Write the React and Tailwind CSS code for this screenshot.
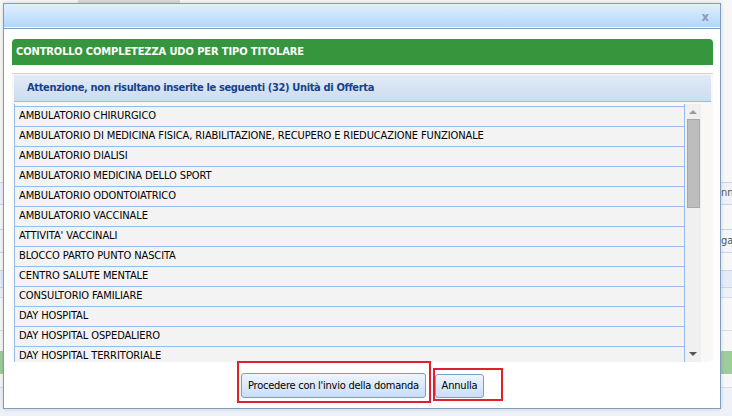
import React from 'react';

const units = [
  'AMBULATORIO CHIRURGICO',
  'AMBULATORIO DI MEDICINA FISICA, RIABILITAZIONE, RECUPERO E RIEDUCAZIONE FUNZIONALE',
  'AMBULATORIO DIALISI',
  'AMBULATORIO MEDICINA DELLO SPORT',
  'AMBULATORIO ODONTOIATRICO',
  'AMBULATORIO VACCINALE',
  "ATTIVITA' VACCINALI",
  'BLOCCO PARTO PUNTO NASCITA',
  'CENTRO SALUTE MENTALE',
  'CONSULTORIO FAMILIARE',
  'DAY HOSPITAL',
  'DAY HOSPITAL OSPEDALIERO',
  'DAY HOSPITAL TERRITORIALE',
];

const font = { fontFamily: '"DejaVu Sans Condensed", "DejaVu Sans", sans-serif' };

function PageBehind() {
  // the form that sits under the modal, only its edges show
  return (
    <div className="flex flex-col w-full h-full bg-[#f7f7f7] text-[11px] text-[#555]" style={font}>
      <div className="h-[3px] flex">
        <div className="ml-[78px] w-[102px] bg-[#d9d9d9]" />
      </div>
      <div className="h-[179px]" />
      <div className="h-[23px] border-y border-[#c8d6e8] bg-[#eef2f8] flex items-center">
        <span className="ml-[721px] whitespace-nowrap">nna</span>
      </div>
      <div className="h-[24px]" />
      <div className="h-[24px] border-y border-[#c8d6e8] bg-[#f3f5f9] flex items-center">
        <span className="ml-[721px] whitespace-nowrap">gata</span>
      </div>
      <div className="h-[17px]" />
      <div className="h-[18px] border-y border-[#c8d6e8] bg-[#e4ecf7]" />
      <div className="h-[10px] border-b border-[#d5dfec] bg-[#eef2f8]" />
      <div className="h-[33px] border-b border-[#d5dfec]" />
      <div className="h-[20px]" />
      <div className="h-[23px] bg-[#9dcd9c]" />
      <div className="h-[14px] border-b border-[#d5dfec]" />
      <div className="flex-1 bg-[#eef2f8]" />
    </div>
  );
}

function ScrollBar() {
  return (
    <div className="w-[17px] bg-[#f0f0f0] border-l border-[#99bbe8] flex flex-col items-center">
      <div className="h-[15px] flex items-center justify-center">
        <div className="w-0 h-0 border-x-[4px] border-x-transparent border-b-[4px] border-b-[#9a9a9a]" />
      </div>
      <div className="w-[13px] h-[89px] bg-[#bdbdbd] border border-[#a7a7a7]" />
      <div className="flex-1" />
      <div className="h-[17px] flex items-center justify-center">
        <div className="w-0 h-0 border-x-[4px] border-x-transparent border-t-[4px] border-t-[#555]" />
      </div>
    </div>
  );
}

export default function App() {
  return (
    <div className="relative w-[732px] h-[416px] overflow-hidden">
      <PageBehind />

      {/* modal window */}
      <div
        className="absolute left-[3px] top-[3px] w-[718px] h-[406px] bg-white border border-[#7f9dbf] shadow-[0_0_4px_rgba(0,0,0,0.15)] flex flex-col"
        style={font}
      >
        <div className="h-[25px] shrink-0 bg-gradient-to-b from-[#e1f0fe] to-[#b0d5fb] border-b border-[#7f9dbf] shadow-[inset_0_-1px_0_#ffffff] flex items-center justify-end pr-[11px]">
          <span className="text-[13px] font-bold text-[#8b9cb3] leading-none">x</span>
        </div>

        <div className="flex-1 flex flex-col pl-[8px] pr-[7px] pt-[10px]">
          <div className="h-[26px] shrink-0 bg-[#36963e] rounded-t-[4px] flex items-center pl-[4px]">
            <span className="text-white font-bold text-[11px] tracking-[-0.1px]">
              CONTROLLO COMPLETEZZA UDO PER TIPO TITOLARE
            </span>
          </div>

          <div className="mt-[8px] h-[289px] shrink-0 bg-[#f9f8f4] border-t border-[#d4d0c8] rounded-b-[5px] px-[2px] pt-[1px] flex flex-col">
            <div className="h-[27px] shrink-0 bg-gradient-to-b from-[#e2eaf6] to-[#ccdcf0] border-b border-[#99bbe8] flex items-center pl-[13px]">
              <span className="text-[#15428b] font-bold text-[11px] tracking-[-0.35px]">
                Attenzione, non risultano inserite le seguenti (32) Unità di Offerta
              </span>
            </div>

            <div className="flex flex-1 min-h-0 pt-[2px] pr-[10px]">
              <div className="flex-1 overflow-hidden border-l border-[#99bbe8] pt-[2px]">
                <div className="border-t border-[#99bbe8]">
                  {units.map((u) => (
                    <div
                      key={u}
                      className="h-[20px] bg-[#f3f3f3] border-b border-[#99bbe8] flex items-center pl-[4px] text-[11px] text-black whitespace-nowrap tracking-[-0.1px]"
                    >
                      {u}
                    </div>
                  ))}
                </div>
              </div>
              <ScrollBar />
            </div>
          </div>

          <div className="flex-1 flex items-center justify-center gap-[9px]">
            <div className="relative">
              <button className="h-[25px] w-[185px] rounded-[3px] border border-[#7b9ec7] bg-gradient-to-b from-[#eef5fd] to-[#c9def6] text-[11px] text-black tracking-[-0.25px]">
                Procedere con l'invio della domanda
              </button>
              <div className="absolute -left-[4px] -right-[5px] -top-[11px] -bottom-[5px] border-2 border-[#e0212b]" />
            </div>
            <div className="relative">
              <button className="h-[24px] w-[49px] rounded-[3px] border border-[#7b9ec7] bg-gradient-to-b from-[#eef5fd] to-[#c9def6] text-[11px] text-black tracking-[-0.2px]">
                Annulla
              </button>
              <div className="absolute -left-[2px] -right-[19px] -top-[4px] -bottom-[3px] border-2 border-[#e0212b]" />
            </div>
          </div>
        </div>
      </div>
    </div>
  );
}
